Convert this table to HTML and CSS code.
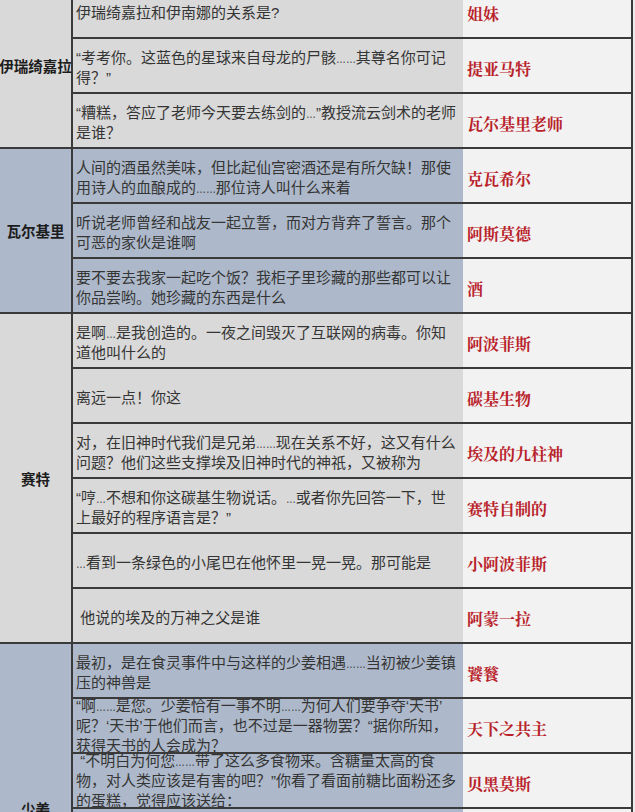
FILE: index.html
```html
<!DOCTYPE html>
<html lang="zh-CN">
<head>
<meta charset="utf-8">
<title>问答表</title>
<link rel="stylesheet" href="styles.css">
</head>
<body>
<div class="sheet">
  <div class="name grey" style="grid-row: span 3">伊瑞绮嘉拉</div>
  <div class="row"><div class="q grey"><div class="t">伊瑞绮嘉拉和伊南娜的关系是?</div></div><div class="a">姐妹</div></div>
  <div class="row"><div class="q grey"><div class="t">“考考你。这蓝色的星球来自母龙的尸骸<span class="e2">……</span>其尊名你可记<br>得？”</div></div><div class="a">提亚马特</div></div>
  <div class="row"><div class="q grey"><div class="t">“糟糕，答应了老师今天要去练剑的<span class="e1">…</span>”教授流云剑术的老师<br>是谁？</div></div><div class="a">瓦尔基里老师</div></div>

  <div class="name blue" style="grid-row: span 3">瓦尔基里</div>
  <div class="row"><div class="q blue"><div class="t">人间的酒虽然美味，但比起仙宫密酒还是有所欠缺！那使<br>用诗人的血酿成的<span class="e2">……</span>那位诗人叫什么来着</div></div><div class="a">克瓦希尔</div></div>
  <div class="row"><div class="q blue"><div class="t">听说老师曾经和战友一起立誓，而对方背弃了誓言。那个<br>可恶的家伙是谁啊</div></div><div class="a">阿斯莫德</div></div>
  <div class="row"><div class="q blue"><div class="t">要不要去我家一起吃个饭？我柜子里珍藏的那些都可以让<br>你品尝哟。她珍藏的东西是什么</div></div><div class="a">酒</div></div>

  <div class="name grey" style="grid-row: span 6">赛特</div>
  <div class="row"><div class="q grey"><div class="t">是啊<span class="e1">…</span>是我创造的。一夜之间毁灭了互联网的病毒。你知<br>道他叫什么的</div></div><div class="a">阿波菲斯</div></div>
  <div class="row"><div class="q grey"><div class="t">离远一点！你这</div></div><div class="a">碳基生物</div></div>
  <div class="row"><div class="q grey"><div class="t">对，在旧神时代我们是兄弟<span class="e2">……</span>现在关系不好，这又有什么<br>问题？他们这些支撑埃及旧神时代的神祇，又被称为</div></div><div class="a">埃及的九柱神</div></div>
  <div class="row"><div class="q grey"><div class="t">“哼<span class="e1">…</span>不想和你这碳基生物说话。<span class="e1">…</span>或者你先回答一下，世<br>上最好的程序语言是？”</div></div><div class="a">赛特自制的</div></div>
  <div class="row"><div class="q grey"><div class="t"><span class="e1">…</span>看到一条绿色的小尾巴在他怀里一晃一晃。那可能是</div></div><div class="a">小阿波菲斯</div></div>
  <div class="row"><div class="q grey"><div class="t">&nbsp;他说的埃及的万神之父是谁</div></div><div class="a">阿蒙一拉</div></div>

  <div class="name blue" style="grid-row: span 6">少姜</div>
  <div class="row"><div class="q blue"><div class="t">最初，是在食灵事件中与这样的少姜相遇<span class="e2">……</span>当初被少姜镇<br>压的神兽是</div></div><div class="a">饕餮</div></div>
  <div class="row"><div class="q blue tall"><div class="t">“啊<span class="e2">……</span>是您。少姜恰有一事不明<span class="e2">……</span>为何人们要争夺‘天书’<br>呢？‘天书’于他们而言，也不过是一器物罢？“据你所知，<br>获得天书的人会成为？</div></div><div class="a">天下之共主</div></div>
  <div class="row"><div class="q blue tall"><div class="t">&nbsp;“不明白为何您<span class="e2">……</span>带了这么多食物来。含糖量太高的食<br>物，对人类应该是有害的吧？”你看了看面前糖比面粉还多<br>的蛋糕，觉得应该送给：</div></div><div class="a">贝黑莫斯</div></div>
  <div class="row"><div class="q blue"></div><div class="a"></div></div>
  <div class="row"><div class="q blue"></div><div class="a"></div></div>
  <div class="row"><div class="q blue"></div><div class="a"></div></div>
</div>
</body>
</html>
```

FILE: styles.css
```css
html, body {
  margin: 0;
  padding: 0;
  background: #ececec;
}

.sheet {
  display: grid;
  grid-template-columns: 71px 558px;
  grid-auto-rows: 53px;
  gap: 2px;
  width: 633px;
  box-sizing: border-box;
  padding-right: 2px;
  margin-top: -16px;
  background: #3a3a3a;
}

.grey { background: #d9d9d9; }
.blue { background: #adb9ca; }

.name {
  grid-column: 1;
  display: flex;
  align-items: center;
  justify-content: center;
  white-space: nowrap;
  font-family: "Liberation Sans", "Noto Sans CJK SC", sans-serif;
  font-weight: 700;
  font-size: 14.5px;
  color: #1c1c1c;
}

.row {
  grid-column: 2;
  display: flex;
  min-width: 0;
}

.q {
  flex: 0 0 390px;
  box-sizing: border-box;
  display: flex;
  flex-direction: column;
  justify-content: center;
  padding: 5px 0 0 3px;
  overflow: hidden;
  white-space: nowrap;
  font-family: "Liberation Sans", "Noto Sans CJK SC", sans-serif;
  font-size: 15px;
  line-height: 20px;
  color: #353535;
}

.q.tall {
  padding-top: 0;
}

.t {
  flex: none;
}

/* narrow ellipsis, as drawn in the source sheet */
.e1,
.e2 {
  display: inline-block;
  transform: scaleX(0.66);
  transform-origin: 0 0;
}

.e1 {
  margin-right: -5.1px;
}

.e2 {
  margin-right: -10.2px;
}

.a {
  flex: 1 1 auto;
  box-sizing: border-box;
  display: flex;
  align-items: center;
  padding: 5px 0 0 4px;
  background: #f2f2f2;
  overflow: hidden;
  white-space: nowrap;
  font-family: "Noto Serif CJK SC", "Noto Sans CJK SC", serif;
  font-weight: 700;
  font-size: 16px;
  color: #b9222a;
}
```
